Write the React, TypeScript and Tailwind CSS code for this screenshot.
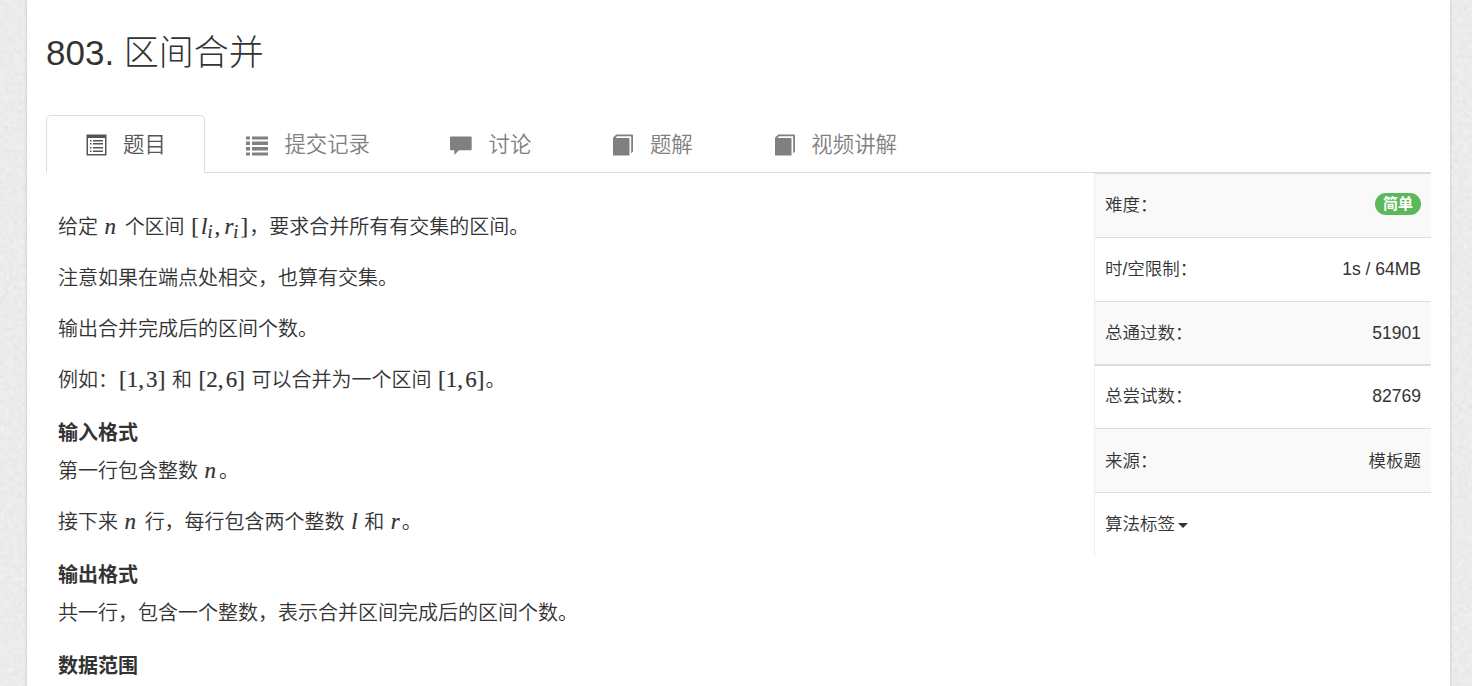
import type { ReactNode } from "react";
import { clsx } from "clsx";

type IconName = "list-alt" | "list" | "comment" | "book";

const TABS: { label: string; icon: IconName; active?: boolean }[] = [
  { label: "题目", icon: "list-alt", active: true },
  { label: "提交记录", icon: "list" },
  { label: "讨论", icon: "comment" },
  { label: "题解", icon: "book" },
  { label: "视频讲解", icon: "book" },
];

function TabIcon({ name }: { name: IconName }) {
  return (
    <svg width="22" height="22" viewBox="0 0 22 22" fill="currentColor" className="shrink-0 overflow-visible">
      {name === "list-alt" && (
        <>
          <path fillRule="evenodd" d="M0.500 0.500h20v21h-20z M2 4v16h17V4z" />
          <path d="M4 6h1.500v1.500H4z M7 6h10v1.500H7z M4 9h1.500v1.500H4z M7 9h10v1.500H7z M4 13h1.500v1.500H4z M7 13h10v1.500H7z M4 16.500h1.500V18H4z M7 16.500h10V18H7z" />
        </>
      )}
      {name === "list" && (
        <path d="M-1 2.500h4v3h-4z M5 2.500h16v3H5z M-1 7.500h4v3.500h-4z M5 7.500h16v3.500H5z M-1 13h4v3.500h-4z M5 13h16v3.500H5z M-1 18.500h4v3h-4z M5 18.500h16v3H5z" />
      )}
      {name === "comment" && (
        <path d="M0 2.500h19.700q1 0 1 1v11.800q0 1-1 1H8L3.300 21v-4.700H0q-1 0-1-1V3.500q0-1 1-1z" />
      )}
      {name === "book" && (
        <path d="M1 3.700L4.300 0.500H20Q21 0.500 21 1.500V17.500L19.200 19.400V2.300H5L3.500 4H16.500Q17.500 4 17.500 5V21.500H1z" />
      )}
    </svg>
  );
}

function Formula({ children, width }: { children: ReactNode; width: string }) {
  return (
    <span
      className={clsx(
        "inline-flex items-baseline justify-between whitespace-nowrap font-['Liberation_Serif',serif] text-[23px] leading-none font-normal [-webkit-text-stroke:0.2px]",
        width,
      )}
    >
      {children}
    </span>
  );
}

function Variable({ name, sub }: { name: string; sub?: string }) {
  return (
    <i>
      {name}
      {sub && <sub className="bottom-[-4px] text-[18px]">{sub}</sub>}
    </i>
  );
}

function Interval({ from, to }: { from: number; to: number }) {
  return (
    <Formula width="w-[48.4px] pr-px pl-px">
      <span>[</span>
      <span>{from}</span>
      <span className="mr-[2px]">,</span>
      <span>{to}</span>
      <span>]</span>
    </Formula>
  );
}

function Heading({ children }: { children: ReactNode }) {
  return <h4 className="mt-[2px] h-[38.500px] text-[20px] leading-[32px] font-bold">{children}</h4>;
}

function Paragraph({ children }: { children: ReactNode }) {
  return <p className="h-[50.9px] leading-[32px] whitespace-nowrap">{children}</p>;
}

function InfoRow({
  label,
  children,
  striped,
  thick,
}: {
  label: ReactNode;
  children?: ReactNode;
  striped?: boolean;
  thick?: boolean;
}) {
  return (
    <div
      className={clsx(
        "flex h-[63.83px] items-center justify-between border-[#ddd] px-[10px]",
        thick ? "border-t-2 pb-[2px]" : "border-t",
        striped && "bg-[#f9f9f9]",
      )}
    >
      <span>{label}</span>
      <span>{children}</span>
    </div>
  );
}

/** Light grey concrete grain behind the page */
function Backdrop() {
  return (
    <svg className="absolute inset-0 h-full w-full" aria-hidden="true">
      <filter id="grain" x="0" y="0" width="100%" height="100%" colorInterpolationFilters="sRGB">
        <feTurbulence type="fractalNoise" baseFrequency="0.22" numOctaves="3" seed="7" />
        <feColorMatrix
          values="0.05 0.04 0 0 0.878
                  0.05 0.04 0 0 0.878
                  0.05 0.04 0 0 0.878
                  0 0 0 0 1"
        />
      </filter>
      <rect width="100%" height="100%" filter="url(#grain)" />
    </svg>
  );
}

export default function App() {
  return (
    <div className="relative h-[686px] overflow-hidden bg-[#ebebeb] font-['Liberation_Sans','Noto_Sans_CJK_SC',sans-serif] font-[350] text-[#333]">
      <Backdrop />
      <main className="relative mr-[22px] ml-[27px] h-full bg-white pr-[19px] pl-[19px] shadow-[0_0_3px_rgba(0,0,0,0.2)]">
        <h1 className="h-[115px] pt-[29px] text-[35px] leading-[48px] font-light">803. 区间合并</h1>

        <nav className="flex h-[58px] gap-[2.600px] border-b border-[#ddd]">
          {TABS.map((tab) => (
            <a
              key={tab.label}
              className={clsx(
                "flex h-[58px] items-center gap-[15.500px] rounded-t-[5px] border pt-[2px] pr-[38px] pl-[38.500px] text-[21.4px]",
                tab.active ? "border-[#ddd] border-b-white bg-white text-[#555]" : "border-transparent text-[#808080]",
              )}
            >
              <TabIcon name={tab.icon} />
              <span>{tab.label}</span>
            </a>
          ))}
        </nav>

        <div className="flex justify-between">
          <article className="pt-[38px] pl-[12px] text-[20px]">
            <Paragraph>
              给定{" "}
              <Formula width="w-[15.500px] pl-px">
                <Variable name="n" />
              </Formula>{" "}
              个区间{" "}
              <Formula width="w-[59px] pr-px pl-px">
                <span>[</span>
                <Variable name="l" sub="i" />
                <span className="mr-[2px]">,</span>
                <Variable name="r" sub="i" />
                <span>]</span>
              </Formula>
              ，要求合并所有有交集的区间。
            </Paragraph>
            <Paragraph>注意如果在端点处相交，也算有交集。</Paragraph>
            <Paragraph>输出合并完成后的区间个数。</Paragraph>
            <Paragraph>
              例如：
              <Interval from={1} to={3} /> 和 <Interval from={2} to={6} /> 可以合并为一个区间{" "}
              <Interval from={1} to={6} />。
            </Paragraph>
            <Heading>输入格式</Heading>
            <Paragraph>
              第一行包含整数{" "}
              <Formula width="w-[15.500px] pl-px">
                <Variable name="n" />
              </Formula>
              。
            </Paragraph>
            <Paragraph>
              接下来{" "}
              <Formula width="w-[15.500px] pl-px">
                <Variable name="n" />
              </Formula>{" "}
              行，每行包含两个整数{" "}
              <Formula width="w-[8.500px] pl-px">
                <Variable name="l" />
              </Formula>{" "}
              和{" "}
              <Formula width="w-[12px] pl-px">
                <Variable name="r" />
              </Formula>
              。
            </Paragraph>
            <Heading>输出格式</Heading>
            <Paragraph>共一行，包含一个整数，表示合并区间完成后的区间个数。</Paragraph>
            <Heading>数据范围</Heading>
          </article>

          <aside className="h-[383px] w-[337px] border-l border-[#eee] text-[17.5px]">
            <InfoRow label="难度：" striped>
              <span className="mb-[2px] flex h-[22px] items-center rounded-full bg-[#5cb85c] px-[8px] text-[15px] font-bold text-white">
                简单
              </span>
            </InfoRow>
            <InfoRow label="时/空限制：">1s / 64MB</InfoRow>
            <InfoRow label="总通过数：" striped>
              51901
            </InfoRow>
            <InfoRow label="总尝试数：" thick>
              82769
            </InfoRow>
            <InfoRow label="来源：" striped>
              模板题
            </InfoRow>
            <InfoRow
              label={
                <span className="flex items-center gap-[2px]">
                  算法标签
                  <span className="mt-[2px] ml-px border-x-[5px] border-t-[5px] border-x-transparent border-t-[#333]" />
                </span>
              }
            />
          </aside>
        </div>
      </main>
    </div>
  );
}
